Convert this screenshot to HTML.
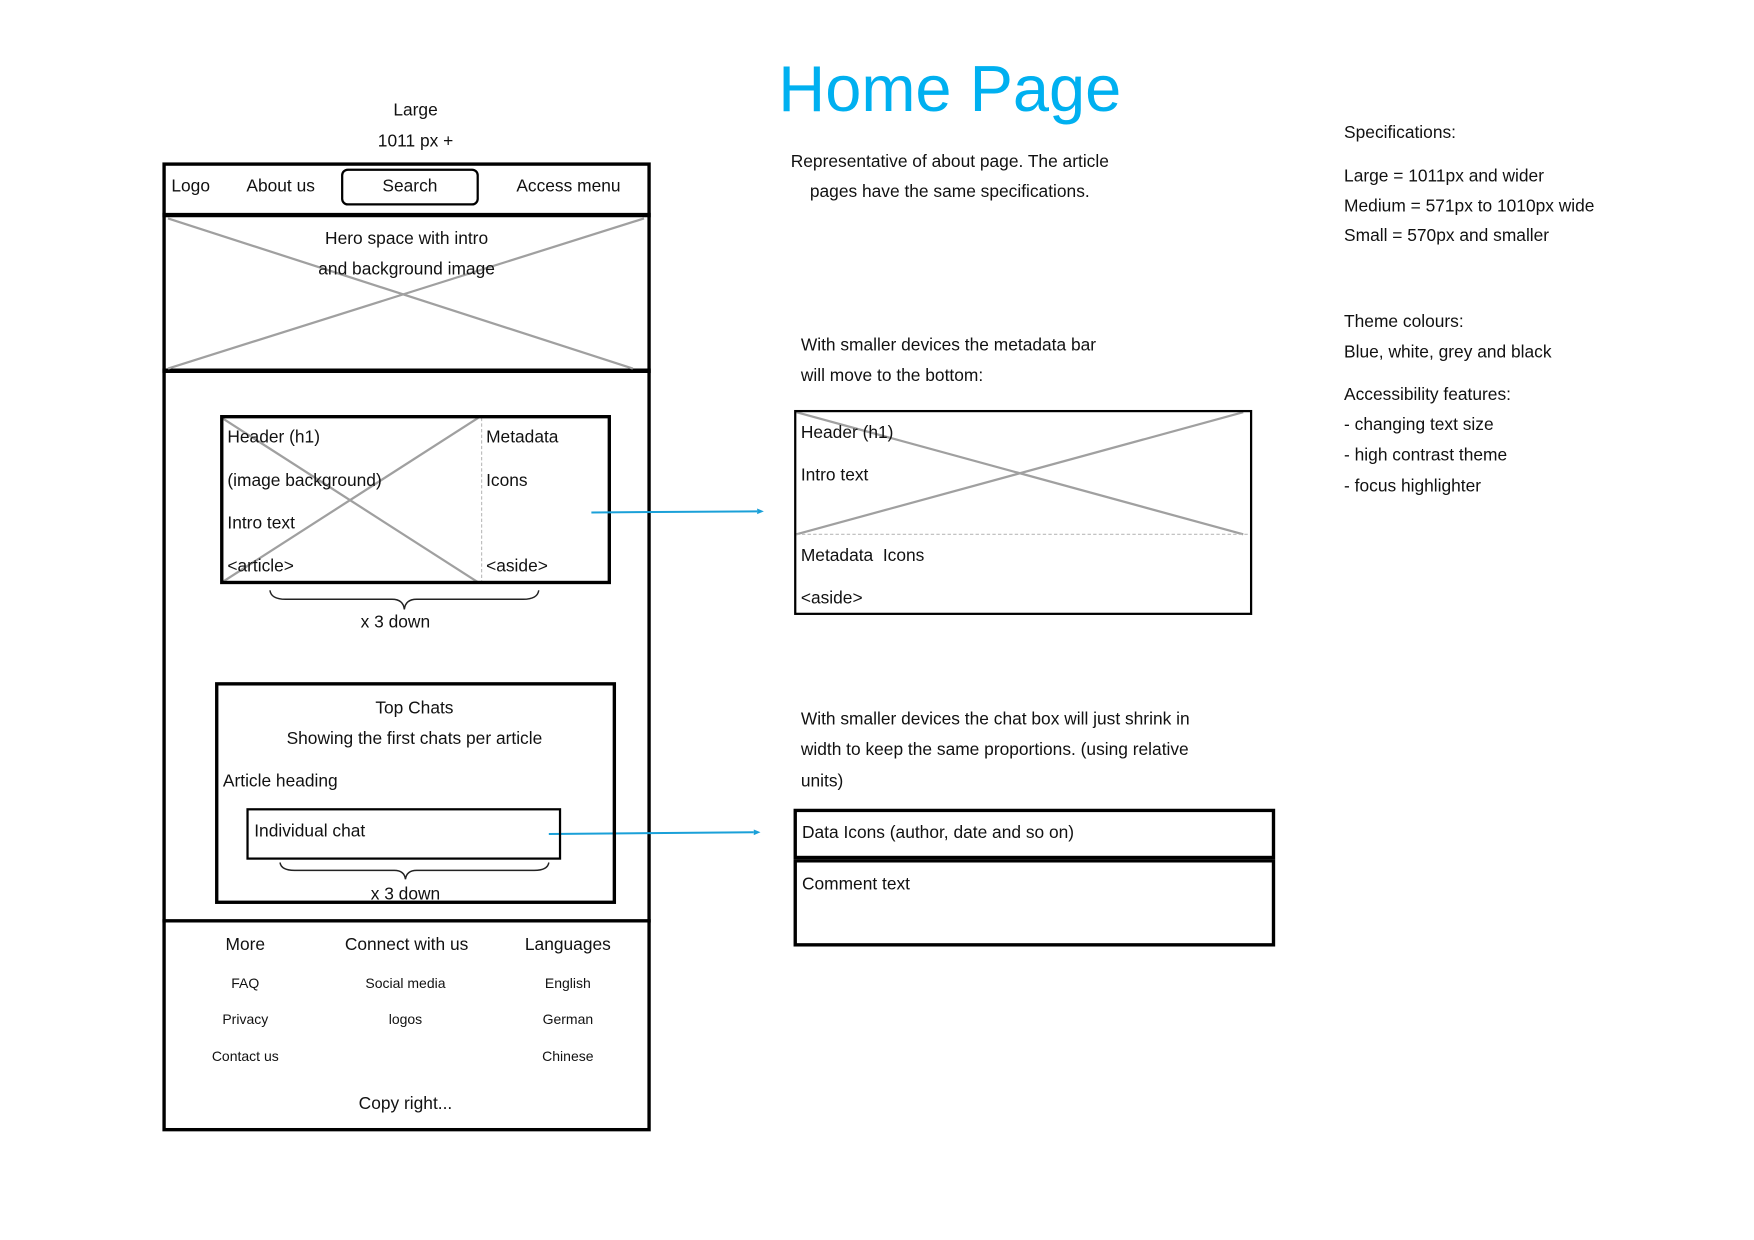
<!DOCTYPE html>
<html><head><meta charset="utf-8"><style>
html,body{margin:0;padding:0;background:#fff;width:1754px;height:1240px;overflow:hidden}
svg{display:block}
text{font-family:"Liberation Sans",sans-serif;font-size:15.5px;fill:#111}
.s{font-size:12.5px}
</style></head><body>
<svg width="1754" height="1240" viewBox="0 0 1566 1107" preserveAspectRatio="none" xmlns="http://www.w3.org/2000/svg">
<rect width="1566" height="1107" fill="#fff"/>
<text x="848" y="99" text-anchor="middle" style="font-size:58px;fill:#00b0f0">Home Page</text>
<text x="371" y="103" text-anchor="middle">Large</text>
<text x="371" y="131" text-anchor="middle">1011 px +</text>

<rect x="146.5" y="146.5" width="433" height="862" fill="none" stroke="#000" stroke-width="3"/>
<line x1="145" y1="192" x2="581" y2="192" stroke="#000" stroke-width="4"/>
<line x1="145" y1="331" x2="581" y2="331" stroke="#000" stroke-width="4"/>
<line x1="145" y1="822" x2="581" y2="822" stroke="#000" stroke-width="3"/>
<text x="153" y="171">Logo</text>
<text x="220" y="171">About us</text>
<rect x="305.5" y="151.5" width="121" height="31" rx="5" fill="none" stroke="#000" stroke-width="2"/>
<text x="366" y="171" text-anchor="middle">Search</text>
<text x="461" y="171">Access menu</text>
<line x1="150" y1="195" x2="565" y2="329" stroke="#a0a0a0" stroke-width="2"/>
<line x1="150" y1="329" x2="575" y2="195" stroke="#a0a0a0" stroke-width="2"/>
<text x="363" y="218" text-anchor="middle">Hero space with intro</text>
<text x="363" y="245" text-anchor="middle">and background image</text>

<line x1="198" y1="373" x2="427" y2="520" stroke="#a0a0a0" stroke-width="2"/>
<line x1="198" y1="520" x2="427" y2="373" stroke="#a0a0a0" stroke-width="2"/>
<line x1="430" y1="373" x2="430" y2="520" stroke="#bbb" stroke-width="1" stroke-dasharray="3,2"/>
<rect x="198" y="372" width="346" height="148" fill="none" stroke="#000" stroke-width="3"/>
<text x="203" y="395">Header (h1)</text>
<text x="203" y="434">(image background)</text>
<text x="203" y="472">Intro text</text>
<text x="203" y="510">&lt;article&gt;</text>
<text x="434" y="395">Metadata</text>
<text x="434" y="434">Icons</text>
<text x="434" y="510">&lt;aside&gt;</text>
<path d="M241 527 Q242 535 255 535 L350 535 Q360 535 361 544 Q362 535 372 535 L467 535 Q480 535 481 527" fill="none" stroke="#222" stroke-width="1.3"/>
<text x="353" y="560" text-anchor="middle">x 3 down</text>

<line x1="528" y1="457.5" x2="676" y2="456.5" stroke="#1aa0d8" stroke-width="1.8"/>
<path d="M676 454 L682 456.5 L676 459 Z" fill="#1aa0d8"/>
<line x1="490" y1="744.5" x2="673" y2="743" stroke="#1aa0d8" stroke-width="1.8"/>
<path d="M673 740.5 L679 743 L673 745.5 Z" fill="#1aa0d8"/>

<rect x="193.5" y="610.5" width="355" height="195" fill="none" stroke="#000" stroke-width="3"/>
<text x="370" y="637" text-anchor="middle">Top Chats</text>
<text x="370" y="664" text-anchor="middle">Showing the first chats per article</text>
<text x="199" y="702">Article heading</text>
<rect x="221" y="722.5" width="279" height="44" fill="none" stroke="#000" stroke-width="2"/>
<text x="227" y="747">Individual chat</text>
<path d="M250 770 Q251 777 263 777 L352 777 Q361 777 362 785 Q363 777 372 777 L477 777 Q489 777 490 770" fill="none" stroke="#222" stroke-width="1.3"/>
<text x="362" y="803" text-anchor="middle">x 3 down</text>

<text x="219" y="848" text-anchor="middle">More</text>
<text x="363" y="848" text-anchor="middle">Connect with us</text>
<text x="507" y="848" text-anchor="middle">Languages</text>
<text class="s" x="219" y="882" text-anchor="middle">FAQ</text>
<text class="s" x="219" y="914" text-anchor="middle">Privacy</text>
<text class="s" x="219" y="947" text-anchor="middle">Contact us</text>
<text class="s" x="362" y="882" text-anchor="middle">Social media</text>
<text class="s" x="362" y="914" text-anchor="middle">logos</text>
<text class="s" x="507" y="882" text-anchor="middle">English</text>
<text class="s" x="507" y="914" text-anchor="middle">German</text>
<text class="s" x="507" y="947" text-anchor="middle">Chinese</text>
<text x="362" y="990" text-anchor="middle">Copy right...</text>

<text x="848" y="149" text-anchor="middle">Representative of about page. The article</text>
<text x="848" y="176" text-anchor="middle">pages have the same specifications.</text>
<text x="715" y="313">With smaller devices the metadata bar</text>
<text x="715" y="340">will move to the bottom:</text>

<line x1="711" y1="368" x2="1110" y2="477" stroke="#a0a0a0" stroke-width="2"/>
<line x1="711" y1="477" x2="1110" y2="368" stroke="#a0a0a0" stroke-width="2"/>
<line x1="711" y1="477" x2="1116" y2="477" stroke="#bbb" stroke-width="1" stroke-dasharray="3,2"/>
<rect x="710" y="367" width="407" height="181" fill="none" stroke="#000" stroke-width="2"/>
<text x="715" y="391">Header (h1)</text>
<text x="715" y="429">Intro text</text>
<text x="715" y="501">Metadata&#160; Icons</text>
<text x="715" y="539">&lt;aside&gt;</text>

<text x="715" y="647">With smaller devices the chat box will just shrink in</text>
<text x="715" y="674">width to keep the same proportions. (using relative</text>
<text x="715" y="702">units)</text>
<rect x="710" y="723.5" width="427" height="42" fill="none" stroke="#000" stroke-width="3"/>
<text x="716" y="748">Data Icons (author, date and so on)</text>
<rect x="710" y="768.5" width="427" height="75" fill="none" stroke="#000" stroke-width="3"/>
<text x="716" y="794">Comment text</text>

<text x="1200" y="123">Specifications:</text>
<text x="1200" y="162">Large = 1011px and wider</text>
<text x="1200" y="189">Medium = 571px to 1010px wide</text>
<text x="1200" y="215">Small = 570px and smaller</text>
<text x="1200" y="292">Theme colours:</text>
<text x="1200" y="319">Blue, white, grey and black</text>
<text x="1200" y="357">Accessibility features:</text>
<text x="1200" y="384">- changing text size</text>
<text x="1200" y="411">- high contrast theme</text>
<text x="1200" y="439">- focus highlighter</text>
</svg>
</body></html>
